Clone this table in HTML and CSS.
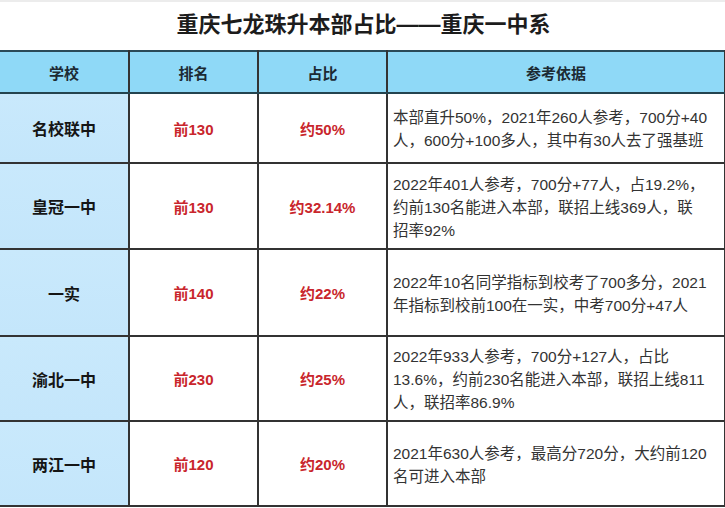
FILE: index.html
```html
<!DOCTYPE html>
<html lang="zh">
<head>
<meta charset="utf-8">
<link rel="stylesheet" href="styles.css">
</head>
<body>
<div class="page">
  <h1 class="title">重庆七龙珠升本部占比——重庆一中系</h1>
  <table class="grid">
    <colgroup>
      <col class="c1"><col class="c2"><col class="c3"><col class="c4">
    </colgroup>
    <thead>
      <tr class="head">
        <th>学校</th><th>排名</th><th>占比</th><th>参考依据</th>
      </tr>
    </thead>
    <tbody>
      <tr class="r1">
        <td class="school">名校联中</td><td class="red">前130</td><td class="red">约50%</td>
        <td class="desc">本部直升50%，2021年260人参考，700分+40<br>人，600分+100多人，其中有30人去了强基班</td>
      </tr>
      <tr class="r2">
        <td class="school">皇冠一中</td><td class="red">前130</td><td class="red">约32.14%</td>
        <td class="desc">2022年401人参考，700分+77人，占19.2%，<br>约前130名能进入本部，联招上线369人，联<br>招率92%</td>
      </tr>
      <tr class="r3">
        <td class="school">一实</td><td class="red">前140</td><td class="red">约22%</td>
        <td class="desc">2022年10名同学指标到校考了700多分，2021<br>年指标到校前100在一实，中考700分+47人</td>
      </tr>
      <tr class="r4">
        <td class="school">渝北一中</td><td class="red">前230</td><td class="red">约25%</td>
        <td class="desc">2022年933人参考，700分+127人，占比<br>13.6%，约前230名能进入本部，联招上线811<br>人，联招率86.9%</td>
      </tr>
      <tr class="r5">
        <td class="school">两江一中</td><td class="red">前120</td><td class="red">约20%</td>
        <td class="desc">2021年630人参考，最高分720分，大约前120<br>名可进入本部</td>
      </tr>
    </tbody>
  </table>
</div>
</body>
</html>
```

FILE: styles.css
```css
html, body {
  margin: 0;
  padding: 0;
  background: #ffffff;
}
body {
  font-family: "Liberation Sans", "Noto Sans CJK SC", sans-serif;
  color: #222;
}
.page {
  width: 725px;
  height: 508px;
  overflow: hidden;
  border-top: 2px solid #ececec;
  box-sizing: border-box;
}
.title {
  margin: 0;
  height: 48px;
  line-height: 46px;
  text-align: center;
  font-size: 22px;
  font-weight: bold;
  color: #1c1c1c;
  padding-left: 2px;
}
.grid {
  border-collapse: collapse;
  table-layout: fixed;
  width: 726px;
  margin-left: -2px;
  border: 2px solid #2b2b2b;
  border-top-color: #2a4a58;
}
.c1 { width: 130px; }
.c2 { width: 129px; }
.c3 { width: 129px; }
.c4 { width: 338px; }
.grid th, .grid td {
  border: 2px solid #333;
  padding: 0;
  vertical-align: middle;
}
.head th {
  height: 40px;
  background: #8fd9f7;
  font-size: 15px;
  font-weight: bold;
  color: #1c2a33;
  border-bottom-color: #24444f;
  border-top-color: #2a4a58;
}
.r1 td { height: 66px; }
.r2 td { height: 82px; }
.r3 td { height: 83px; }
.r4 td { height: 81px; }
.r5 td { height: 81px; }
.school {
  background: linear-gradient(#c9e9fc, #c4e6fb);
  text-align: center;
  font-size: 16px;
  font-weight: bold;
  color: #151515;
}
.red {
  text-align: center;
  font-size: 15px;
  font-weight: bold;
  color: #c9262c;
}
.desc {
  font-size: 15.5px;
  line-height: 23px;
  color: #333;
  padding: 2px 0 0 5px !important;
  white-space: nowrap;
}
```
